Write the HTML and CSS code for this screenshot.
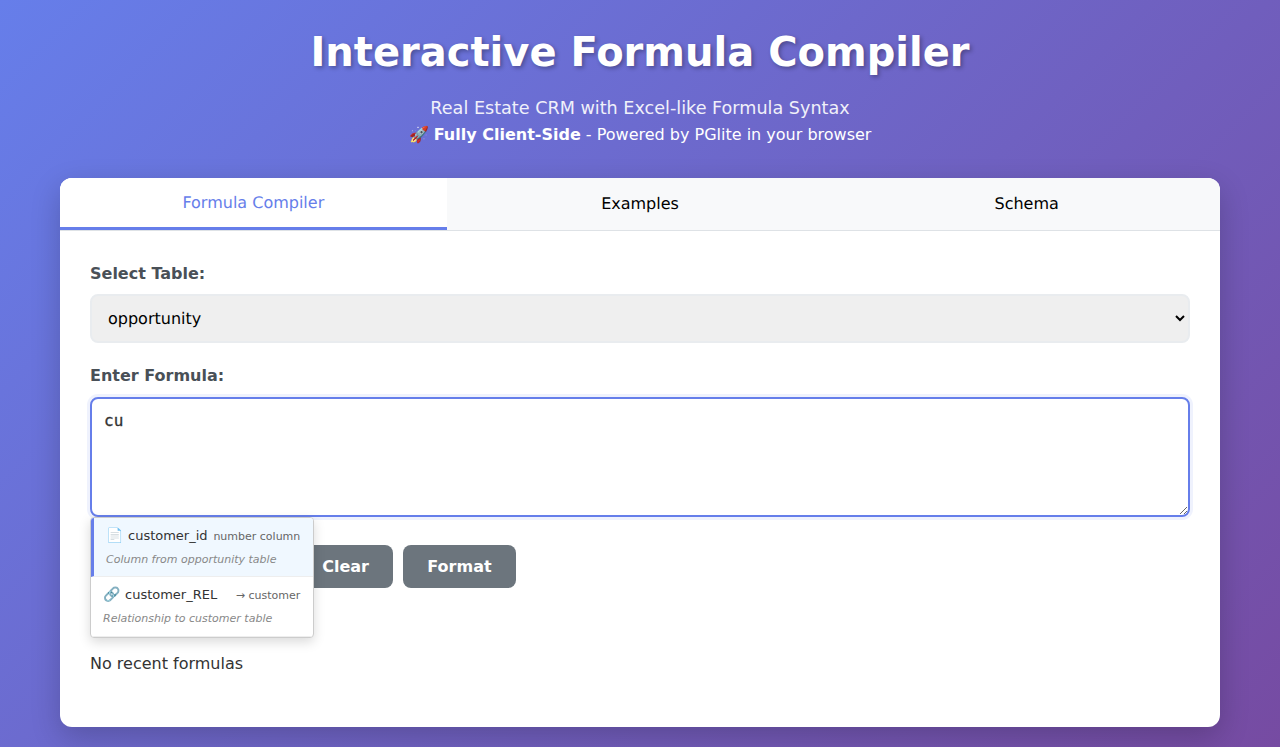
FILE: index.html
```html
<!DOCTYPE html>
<html lang="en">
<head>
<meta charset="utf-8">
<title>Interactive Formula Compiler</title>
<link rel="stylesheet" href="styles.css">
</head>
<body>
<div class="container">
  <header class="header">
    <h1>Interactive Formula Compiler</h1>
    <p class="subtitle">Real Estate CRM with Excel-like Formula Syntax</p>
    <p class="tagline">🚀 <strong>Fully Client-Side</strong> - Powered by PGlite in your browser</p>
  </header>
  <main class="card">
    <nav class="tabs">
      <button class="tab active">Formula Compiler</button>
      <button class="tab">Examples</button>
      <button class="tab">Schema</button>
    </nav>
    <section class="content">
      <div class="group">
        <label for="table">Select Table:</label>
        <select id="table" class="field"><option>opportunity</option></select>
      </div>
      <div class="group">
        <label for="formula">Enter Formula:</label>
        <div class="editor">
          <textarea id="formula" class="field formula" spellcheck="false">cu</textarea>
          <div class="autocomplete">
            <div class="item selected">
              <div class="row"><span class="icon">📄</span><span class="name">customer_id</span><span class="type">number column</span></div>
              <div class="desc">Column from opportunity table</div>
            </div>
            <div class="item">
              <div class="row"><span class="icon">🔗</span><span class="name">customer_REL</span><span class="type">→ customer</span></div>
              <div class="desc">Relationship to customer table</div>
            </div>
          </div>
        </div>
      </div>
      <div class="buttons">
        <button class="btn primary"></button>
        <button class="btn">Clear</button>
        <button class="btn">Format</button>
      </div>
      <div class="recent">No recent formulas</div>
    </section>
  </main>
</div>
</body>
</html>
```
FILE: styles.css
```css
* { margin: 0; padding: 0; box-sizing: border-box; }
body {
  font-family: "Segoe UI", Tahoma, Geneva, Verdana, "DejaVu Sans", sans-serif;
  line-height: 1.6;
  color: #333;
  min-height: 100vh;
  background: linear-gradient(135deg, #667eea 0%, #764ba2 100%);
}
.container { max-width: 1200px; margin: 0 auto; padding: 20px; }
.header { text-align: center; color: white; margin-bottom: 30px; }
.header h1 { font-size: 40px; margin-bottom: 10px; text-shadow: 2px 2px 4px rgba(0,0,0,.3); }
.subtitle { font-size: 17.6px; opacity: .9; }
.card { background: white; border-radius: 12px; overflow: hidden; box-shadow: 0 10px 30px rgba(0,0,0,.2); height: 549px; }
.tabs { display: flex; height: 53px; background: #f8f9fa; border-bottom: 1px solid #dee2e6; }
.tab { flex: 1; border: 0; background: none; font-family: inherit; font-size: 16px; font-weight: 500; color: #000; text-rendering: geometricPrecision; }
.tab.active { background: white; color: #667eea; border-bottom: 3px solid #667eea; }
.content { padding: 30px; }
.group { margin-bottom: 20px; }
label { display: block; font-weight: 600; color: #495057; margin-bottom: 8px; }
.field { display: block; width: 100%; border: 2px solid #e9ecef; border-radius: 8px; padding: 12px; font-family: inherit; font-size: 16px; }
select.field { height: 49px; color: #000; text-rendering: geometricPrecision; }
.editor { position: relative; margin-bottom: 28px; }
.formula { height: 120px; resize: vertical; font-family: "DejaVu Sans Mono", monospace; border-color: #667eea; outline: none; box-shadow: 0 0 0 3px rgba(102,126,234,.1); color: #333; -webkit-text-stroke: 0.3px #333; }
.autocomplete { position: absolute; z-index: 2; top: 120px; left: 0; width: 224px; height: 121px; background: white; border: 1px solid #ccc; border-radius: 4px; box-shadow: 0 4px 12px rgba(0,0,0,.15); overflow: hidden; }
.item { height: 59px; padding: 8px 12px; border-bottom: 1px solid #eee; }
.item:last-child { height: 60px; }
.row { display: flex; align-items: center; font-size: 13px; line-height: 21px; height: 20px; }
.item.selected { background: #f0f8ff; border-left: 3px solid #667eea; }
.icon { width: 16px; margin-right: 6px; margin-left: -0.4px; font-size: 14px; padding-bottom: 1px; }
.name { padding-bottom: 1px; margin-left: 0.4px; }
.type { margin-left: auto; padding: 1px 0.7px 0 0; font-size: 11px; color: #666; }
.desc { margin-top: 5px; font-size: 11px; line-height: 18px; font-style: italic; color: #888; }
.buttons { display: flex; gap: 10px; }
.btn { height: 43px; padding: 0 24px; border: 0; border-radius: 8px; background: #6c757d; color: white; font-family: inherit; font-size: 16px; font-weight: 600; }
.btn:last-child { width: 113px; }
.btn.primary { width: 198.2px; background: #667eea; }
.recent { margin-top: 63px; }
```
